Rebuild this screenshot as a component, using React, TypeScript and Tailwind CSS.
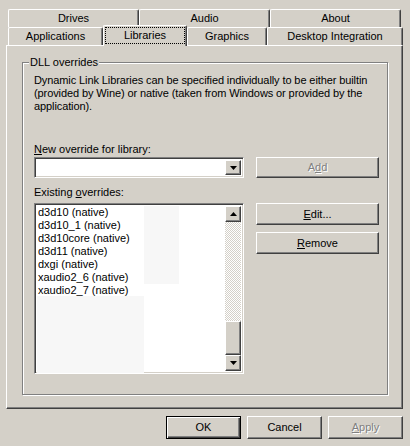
import React from "react";

const raised =
  "bg-[#d4d0c8] border border-t-white border-l-white border-r-[#404040] border-b-[#404040] shadow-[inset_-1px_-1px_0_#808080]";
const sunken =
  "border border-t-[#808080] border-l-[#808080] border-r-white border-b-white shadow-[inset_1px_1px_0_#404040,inset_-1px_-1px_0_#d4d0c8]";

function Tab({ label, className }: { label: string; className: string }) {
  return (
    <div
      className={
        "flex h-[18px] items-center justify-center rounded-t-[2px] border-l border-t border-r border-l-white border-t-white border-r-[#404040] shadow-[inset_-1px_0_0_#808080] " +
        className
      }
    >
      {label}
    </div>
  );
}

function Arrow({ up }: { up?: boolean }) {
  return (
    <svg width="7" height="4" viewBox="0 0 7 4">
      {up ? <polygon points="3.5,0 7,4 0,4" fill="#000" /> : <polygon points="0,0 7,0 3.5,4" fill="#000" />}
    </svg>
  );
}

function Button({
  children,
  className = "",
  disabled,
}: {
  children: React.ReactNode;
  className?: string;
  disabled?: boolean;
}) {
  return (
    <div
      className={
        raised +
        " flex items-center justify-center " +
        (disabled ? "text-[#808080] [text-shadow:1px_1px_0_#fff] " : "text-black ") +
        className
      }
    >
      {children}
    </div>
  );
}

const items = [
  "d3d10 (native)",
  "d3d10_1 (native)",
  "d3d10core (native)",
  "d3d11 (native)",
  "dxgi (native)",
  "xaudio2_6 (native)",
  "xaudio2_7 (native)",
];

export default function App() {
  return (
    <div className="flex h-[446px] w-[410px] flex-col bg-[#d4d0c8] pt-[9px] font-['Liberation_Sans',Arial,sans-serif] text-[11px] leading-[13px] text-black">
      {/* tab rows */}
      <div className="flex pl-[8px]">
        <Tab label="Drives" className="w-[131px]" />
        <Tab label="Audio" className="w-[131px]" />
        <Tab label="About" className="w-[131px]" />
      </div>
      <div className="flex h-[18px] items-end pl-[8px]">
        <Tab label="Applications" className="w-[95px]" />
        <div className="relative z-10 -mb-[1px] flex h-[21px] w-[84px] items-center justify-center rounded-t-[2px] border-l border-t border-r border-l-white border-t-white border-r-[#404040] bg-[#d4d0c8] px-[1px] pb-[2px] pt-[1px] shadow-[inset_-1px_0_0_#808080]">
          <div className="flex h-full w-full items-center justify-center border border-dotted border-black">
            Libraries
          </div>
        </div>
        <Tab label="Graphics" className="w-[80px]" />
        <Tab label="Desktop Integration" className="w-[136px]" />
      </div>

      {/* tab panel */}
      <div className="ml-[6px] h-[364px] w-[397px] border border-l-white border-t-white border-r-[#404040] border-b-[#404040] shadow-[inset_-1px_-1px_0_#808080]">
        <div className="relative ml-[15px] mt-[16px] h-[333px] w-[366px] border border-[#808080] pl-[11px] pt-[11px] shadow-[1px_1px_0_#fff,inset_1px_1px_0_#fff]">
          <div className="absolute -top-[7px] left-[6px] bg-[#d4d0c8] px-[1px]">DLL overrides</div>

          <div className="whitespace-nowrap tracking-[-0.1px]">
            <div>Dynamic Link Libraries can be specified individually to be either builtin</div>
            <div>(provided by Wine) or native (taken from Windows or provided by the</div>
            <div>application).</div>
          </div>

          <div className="mt-[30px]">
            <span className="underline underline-offset-[1px]">N</span>ew override for library:
          </div>
          <div className="mt-[1px] flex gap-[12px]">
            <div className={sunken + " flex h-[21px] w-[210px] justify-end bg-white p-[2px]"}>
              <div className={raised + " flex w-[16px] items-center justify-center"}>
                <Arrow />
              </div>
            </div>
            <Button disabled className="h-[21px] w-[123px]">
              A<span className="underline underline-offset-[1px]">d</span>d
            </Button>
          </div>

          <div className="mt-[8px]">
            Existing <span className="underline underline-offset-[1px]">o</span>verrides:
          </div>
          <div className="mt-[4px] flex gap-[12px]">
            <div className={sunken + " flex h-[171px] w-[210px] bg-white p-[2px]"}>
              <div className="relative flex-1 pl-[1px]">
                <div className="absolute left-[107px] top-0 h-[78px] w-[35px] bg-[#f7f7f7]" />
                <div className="absolute left-0 top-[90px] h-[77px] w-[107px] bg-[#f7f7f7]" />
                <div className="relative">
                  {items.map((it) => (
                    <div key={it} className="h-[13px]">
                      {it}
                    </div>
                  ))}
                </div>
              </div>
              <div className="flex w-[16px] flex-col">
                <div className={raised + " flex h-[16px] items-center justify-center"}>
                  <Arrow up />
                </div>
                <div className="flex-1 bg-[repeating-conic-gradient(#d4d0c8_0_25%,#fff_0_50%)] bg-[length:2px_2px]" />
                <div className={raised + " h-[34px]"} />
                <div className={raised + " flex h-[16px] items-center justify-center"}>
                  <Arrow />
                </div>
              </div>
            </div>
            <div className="flex flex-col gap-[7px]">
              <Button className="h-[22px] w-[123px]">
                <span className="underline underline-offset-[1px]">E</span>dit...
              </Button>
              <Button className="h-[22px] w-[123px]">
                <span className="underline underline-offset-[1px]">R</span>emove
              </Button>
            </div>
          </div>
        </div>
      </div>

      {/* dialog buttons */}
      <div className="mt-[7px] flex justify-end gap-[6px] pr-[7px]">
        <div className="flex h-[23px] w-[75px] items-center justify-center border border-black bg-[#d4d0c8] shadow-[inset_1px_1px_0_#fff,inset_-1px_-1px_0_#404040,inset_-2px_-2px_0_#808080]">
          OK
        </div>
        <Button className="h-[23px] w-[75px]">Cancel</Button>
        <Button disabled className="h-[23px] w-[75px]">
          <span className="underline underline-offset-[1px]">A</span>pply
        </Button>
      </div>
    </div>
  );
}
